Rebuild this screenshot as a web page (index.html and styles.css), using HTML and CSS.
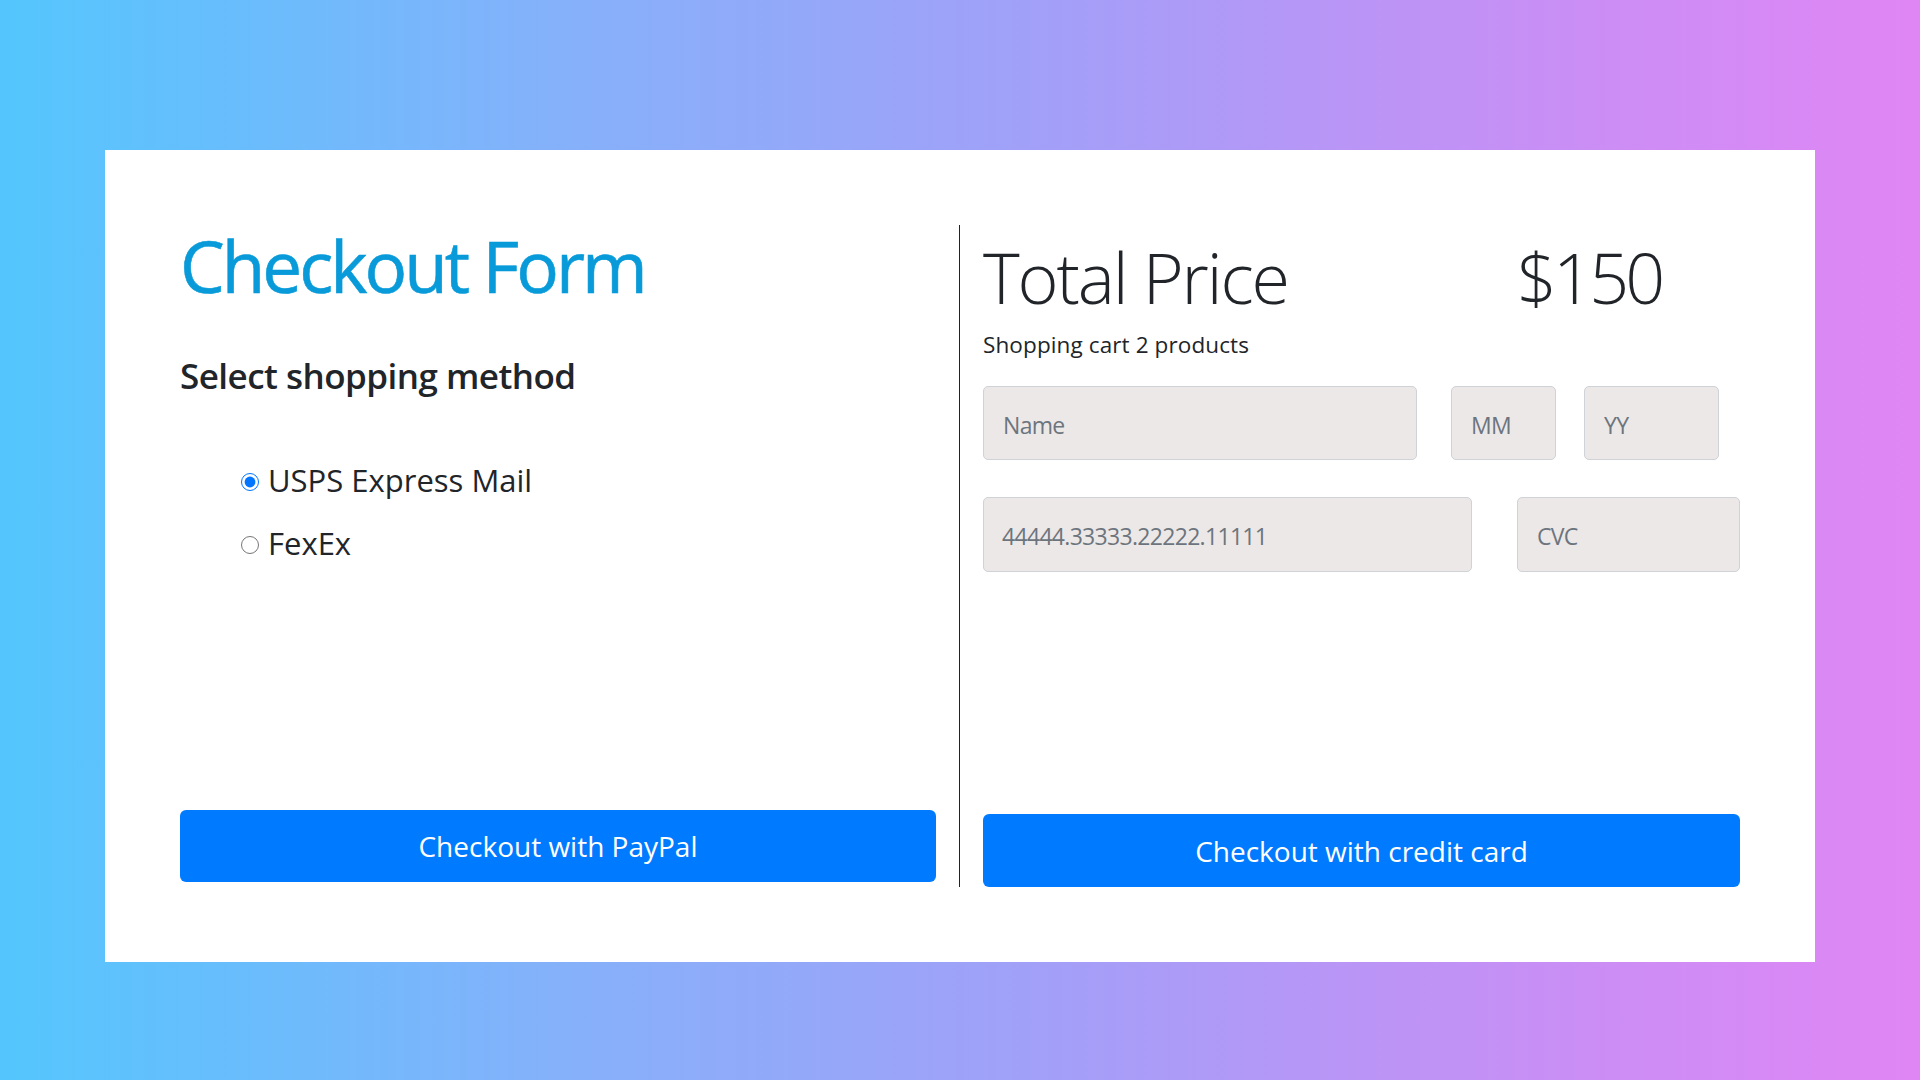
FILE: index.html
```html
<!DOCTYPE html>
<html lang="en">
<head>
<meta charset="utf-8">
<title>Checkout Form</title>
<link rel="stylesheet" href="styles.css">
</head>
<body>
<main class="page">
  <section class="card">
    <div class="col col-left">
      <h1 class="title">Checkout Form</h1>
      <h3 class="subtitle">Select shopping method</h3>
      <div class="methods">
        <label class="method"><input type="radio" name="ship" checked><span>USPS Express Mail</span></label>
        <label class="method"><input type="radio" name="ship"><span>FexEx</span></label>
      </div>
      <button class="btn btn-paypal" type="button">Checkout with PayPal</button>
    </div>
    <div class="divider"></div>
    <div class="col col-right">
      <div class="total">
        <span class="total-label">Total Price</span>
        <span class="total-amount">$150</span>
      </div>
      <p class="cart">Shopping cart 2 products</p>
      <div class="fields fields-top">
        <input class="field f-name" type="text" placeholder="Name">
        <input class="field f-mm" type="text" placeholder="MM">
        <input class="field f-yy" type="text" placeholder="YY">
      </div>
      <div class="fields fields-bottom">
        <input class="field f-number" type="text" placeholder="44444.33333.22222.11111">
        <input class="field f-cvc" type="text" placeholder="CVC">
      </div>
      <button class="btn btn-card" type="button">Checkout with credit card</button>
    </div>
  </section>
</main>
</body>
</html>
```

FILE: styles.css
```css
* { box-sizing: border-box; }

html, body {
  margin: 0;
  padding: 0;
  height: 100%;
}

body {
  font-family: "Open Sans", "Noto Sans", sans-serif;
  color: #212529;
  background: linear-gradient(90deg, #54c6fd 0%, #86b0fa 30%, #a39ff8 55%, #c78ff5 80%, #e086f4 100%);
}

.page {
  padding: 150px 105px 0 105px;
}

.card {
  background: #ffffff;
  height: 812px;
  padding: 75px;
  display: grid;
  grid-template-columns: 756px 1px 1fr;
  column-gap: 23px;
}

.col {
  display: flex;
  flex-direction: column;
  min-width: 0;
}

.divider {
  background: #222222;
}

/* left column */
.title {
  margin: -2px 0 0 0;
  font-size: 71px;
  line-height: 86px;
  font-weight: 500;
  letter-spacing: -0.042em;
  color: #089ad9;
  -webkit-text-stroke: 0.6px #089ad9;
}

.subtitle {
  margin: 45px 0 0 0;
  font-size: 35px;
  line-height: 43px;
  font-weight: 600;
  letter-spacing: -0.015em;
  color: #212529;
}

.methods {
  margin-top: 65px;
  padding-left: 61px;
  display: flex;
  flex-direction: column;
  row-gap: 27px;
}

.method {
  display: flex;
  align-items: center;
  column-gap: 9px;
  font-size: 31px;
  line-height: 36px;
  letter-spacing: 0;
  color: #212529;
}

.method input {
  margin: 0;
  width: 18px;
  height: 18px;
  accent-color: #0075ff;
  position: relative;
  top: 2px;
}

.btn {
  margin-top: auto;
  border: 0;
  border-radius: 6px;
  background: #007bff;
  color: #ffffff;
  font-family: "Open Sans", "Noto Sans", sans-serif;
  font-size: 28px;
  letter-spacing: 0;
  font-weight: 400;
  width: 100%;
}

.btn-paypal {
  height: 72px;
  margin-bottom: 5px;
}

.btn-card {
  height: 73px;
}

/* right column */
.total {
  margin-top: 10px;
  display: grid;
  grid-template-columns: 534px auto;
  font-size: 70px;
  line-height: 84px;
  font-weight: 300;
  letter-spacing: -0.03em;
  color: #212529;
}

.total-amount {
  font-size: 70px;
  letter-spacing: -0.055em;
}

.cart {
  margin: 13px 0 0 0;
  font-size: 22.5px;
  line-height: 26px;
  letter-spacing: 0.005em;
}

.fields {
  display: flex;
}

.fields-top {
  margin-top: 28px;
  height: 74px;
}

.fields-bottom {
  margin-top: 37px;
  height: 75px;
}

.field {
  height: 100%;
  border: 1px solid #cfd2d6;
  border-radius: 5px;
  background: #ece8e8;
  padding: 3px 0 0 19px;
  font-family: "Open Sans", "Noto Sans", sans-serif;
  font-size: 23px;
  letter-spacing: -0.03em;
  color: #495057;
}

.field::placeholder {
  color: #6c757d;
  opacity: 1;
}

.f-name { width: 434px; }
.f-mm { width: 105px; margin-left: 34px; }
.f-yy { width: 135px; margin-left: 28px; }
.f-number { width: 489px; padding-left: 18px; }
.f-cvc { width: 223px; margin-left: 45px; }
```
